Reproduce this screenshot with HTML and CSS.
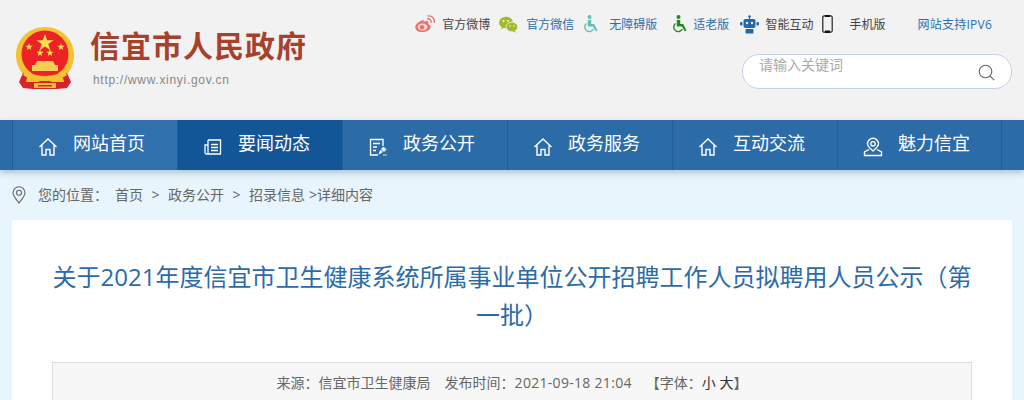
FILE: index.html
```html
<!DOCTYPE html>
<html lang="zh-CN">
<head>
  <meta charset="UTF-8">
  <meta name="viewport" content="width=device-width, initial-scale=1.0">
  <title>关于2021年度信宜市卫生健康系统所属事业单位公开招聘工作人员拟聘用人员公示（第一批）</title>
  <link rel="stylesheet" href="styles.css">
</head>
<body>
  <header class="top">
    <div class="brand">
      <svg class="emblem" viewBox="0 0 58 64" width="58" height="64">
        <path d="M29 1C13 1 0 13 0 29c0 9 4 17 10 22h38c6-5 10-13 10-22C58 13 45 1 29 1z" fill="#f2c230"/>
        <path d="M7 47L3 56l4 6 10 1h24l10-1 4-6-4-9z" fill="#d8232a"/>
        <circle cx="29" cy="28" r="23.500" fill="#ec2227"/>
        <path d="M29 8l2.100 6.200h6.500l-5.300 3.900 2 6.200-5.300-3.800-5.300 3.800 2-6.200-5.300-3.900h6.500z" fill="#fbe14b"/>
        <path d="M13 17l.9 2.700h2.800l-2.300 1.700.9 2.700-2.300-1.700-2.300 1.700.9-2.700-2.300-1.700h2.800zM45 17l.9 2.700h2.800l-2.300 1.700.9 2.700-2.300-1.700-2.300 1.700.9-2.700-2.300-1.700h2.800zM24 23l.9 2.700h2.800l-2.300 1.700.9 2.700-2.300-1.700-2.300 1.700.9-2.700-2.300-1.700h2.800zM34 23l.9 2.700h2.800l-2.300 1.700.9 2.700-2.300-1.700-2.300 1.700.9-2.700-2.300-1.700h2.800z" fill="#fbe14b"/>
        <path d="M21 35h16l2 4h3v6H16v-6h3z" fill="#f6cf52"/>
        <path d="M10 44c5 3 9 6 19 6s14-3 19-6l3 5c-6 4-12 6-22 6s-16-2-22-6z" fill="#f2c230"/>
        <path d="M11 52h36l1 4H36l-7-3-7 3H10z" fill="#f2c230"/>
        <rect x="18" y="57" width="22" height="5" fill="#f2c230"/>
        <path d="M22 59h14v1.500H22z" fill="#d8232a"/>
      </svg>
      <div class="brand-text">
        <h1 class="brand-name">信宜市人民政府</h1>
        <p class="brand-url">http://www.xinyi.gov.cn</p>
      </div>
    </div>

    <div class="tools">
      <ul class="links">
        <li class="link link-weibo">
          <svg viewBox="0 0 20 18" width="20" height="18">
            <path d="M8 5C4 6 0 9.500 .3 12.500c.4 3.300 4 5 8.200 4.500 4.300-.5 7.500-3 7.200-5.500-.2-1.500-1.700-2.100-2.500-2.300.7-1.700.3-2.800-.8-3.100-1.200-.4-2.800.3-3.700 1 .3-1.800-.3-2.900-.7-2.600z" fill="#e8736f"/>
            <ellipse cx="7.500" cy="12" rx="4.800" ry="3.400" fill="#f7d9d7"/>
            <circle cx="7" cy="12.300" r="2.400" fill="#e8736f"/>
            <path d="M12 3.800c2.600-.6 4.600 1.500 4.100 4M12.500 1C16.800.2 20.300 3.500 19 8" fill="none" stroke="#e8736f" stroke-width="1.400"/>
          </svg>
          <span>官方微博</span>
        </li>
        <li class="link link-blue link-wechat">
          <svg viewBox="0 0 19 17" width="19" height="17">
            <ellipse cx="7" cy="6.500" rx="7" ry="5.800" fill="#a2bb2b"/>
            <path d="M3 10l-.8 3.500L6 11z" fill="#a2bb2b"/>
            <ellipse cx="13" cy="11" rx="5.800" ry="4.800" fill="#a2bb2b" stroke="#f2f2f2" stroke-width=".8"/>
            <path d="M15.500 14l1.500 2.800-3.800-1.800z" fill="#a2bb2b"/>
            <circle cx="4.600" cy="5" r="1" fill="#f2f2f2"/>
            <circle cx="9" cy="5" r="1" fill="#f2f2f2"/>
            <circle cx="11" cy="10" r=".8" fill="#f2f2f2"/>
            <circle cx="15" cy="10" r=".8" fill="#f2f2f2"/>
          </svg>
          <span>官方微信</span>
        </li>
        <li class="link link-blue link-access">
          <svg viewBox="0 0 16 18" width="16" height="18">
            <circle cx="6.500" cy="2" r="2" fill="#5fc0b2"/>
            <path d="M4.800 5h3.400v4h3l3.300 6.500-1.800.8L10 11.500H4.800z" fill="#5fc0b2"/>
            <path d="M3.500 8.500a4.500 4.500 0 1 0 6.800 5.500" fill="none" stroke="#5fc0b2" stroke-width="1.400"/>
          </svg>
          <span>无障碍版</span>
        </li>
        <li class="link link-blue link-elder">
          <svg viewBox="0 0 16 18" width="16" height="18">
            <circle cx="6.500" cy="2" r="2" fill="#22881f"/>
            <path d="M4.800 5h3.400v4h3l3.300 6.500-1.800.8L10 11.500H4.800z" fill="#22881f"/>
            <path d="M3.500 8.500a4.500 4.500 0 1 0 6.800 5.500" fill="none" stroke="#22881f" stroke-width="1.400"/>
          </svg>
          <span>适老版</span>
        </li>
        <li class="link link-robot">
          <svg viewBox="0 0 19 19" width="19" height="19">
            <circle cx="9.500" cy="1.500" r="1.300" fill="#2467a8"/>
            <rect x="9" y="2" width="1" height="2" fill="#2467a8"/>
            <rect x="3.500" y="4" width="12" height="9" rx="2" fill="#2467a8"/>
            <rect x="0" y="7" width="2.500" height="3.500" rx="1" fill="#2467a8"/>
            <rect x="16.500" y="7" width="2.500" height="3.500" rx="1" fill="#2467a8"/>
            <circle cx="7" cy="8" r="1.200" fill="#f2f2f2"/>
            <circle cx="12" cy="8" r="1.200" fill="#f2f2f2"/>
            <rect x="5.500" y="14" width="8" height="4.500" rx="1" fill="#2467a8"/>
          </svg>
          <span>智能互动</span>
        </li>
        <li class="link link-phone">
          <svg viewBox="0 0 11 18" width="11" height="18">
            <rect x=".8" y=".8" width="9.400" height="16.400" rx="1.500" fill="#f2f2f2" stroke="#222" stroke-width="1.200"/>
            <rect x="3" y="0" width="5" height="2" fill="#111"/>
            <rect x="3" y="15.500" width="5" height="2.500" fill="#111"/>
          </svg>
          <span>手机版</span>
        </li>
        <li class="link link-blue link-ipv6"><span>网站支持IPV6</span></li>
      </ul>

      <div class="search">
        <span class="search-hint">请输入关键词</span>
        <svg class="search-icon" viewBox="0 0 17 17" width="17" height="17">
          <circle cx="7.500" cy="7.500" r="6.300" fill="none" stroke="#666" stroke-width="1.100"/>
          <path d="M12 12l4.200 4.200" stroke="#666" stroke-width="1.100"/>
        </svg>
      </div>
    </div>
  </header>

  <nav class="nav">
    <a class="nav-item nav-first">
      <svg viewBox="0 0 20 20" width="20" height="20"><path d="M1.500 10L10 2l8.500 8M4 8.500V18h4v-5.500h4V18h4V8.500" fill="none" stroke="#fff" stroke-width="1.400"/></svg>
      <span>网站首页</span>
    </a>
    <a class="nav-item nav-active">
      <svg viewBox="0 0 20 20" width="20" height="20"><path d="M5 3h12.500v14H3.500a1.500 1.500 0 0 1-1.500-1.500V8h3M5 3v14M8 7.500h7M8 10.500h7M8 13.500h7" fill="none" stroke="#fff" stroke-width="1.300"/></svg>
      <span>要闻动态</span>
    </a>
    <a class="nav-item">
      <svg viewBox="0 0 20 20" width="20" height="20"><path d="M10 18H2.500V2.500h12.500V9M5 6.500h7M5 10h4M5 13.500h3" fill="none" stroke="#fff" stroke-width="1.300"/><path d="M11 17l1.500-4 2 2zM13.500 12l2-2 2.500 2.500-2 2zM15 18h4" fill="#fff" stroke="#fff" stroke-width=".8"/></svg>
      <span>政务公开</span>
    </a>
    <a class="nav-item">
      <svg viewBox="0 0 20 20" width="20" height="20"><path d="M1.500 10L10 2l8.500 8M4 8.500V18h4v-5.500h4V18h4V8.500" fill="none" stroke="#fff" stroke-width="1.400"/></svg>
      <span>政务服务</span>
    </a>
    <a class="nav-item">
      <svg viewBox="0 0 20 20" width="20" height="20"><path d="M1.500 10L10 2l8.500 8M4 8.500V18h4v-5.500h4V18h4V8.500" fill="none" stroke="#fff" stroke-width="1.400"/></svg>
      <span>互动交流</span>
    </a>
    <a class="nav-item">
      <svg viewBox="0 0 20 20" width="20" height="20"><path d="M10 14C7 11.500 4.500 9.500 4.500 6.800a5.500 5.500 0 0 1 11 0c0 2.700-2.500 4.700-5.500 7.200z" fill="none" stroke="#fff" stroke-width="1.400"/><circle cx="10" cy="6.800" r="2.200" fill="none" stroke="#fff" stroke-width="1.300"/><path d="M6 12.500L1.500 15v3.500h17V15L14 12.500" fill="none" stroke="#fff" stroke-width="1.400"/></svg>
      <span>魅力信宜</span>
    </a>
  </nav>

  <div class="crumbs">
    <svg viewBox="0 0 14 18" width="14" height="18"><path d="M7 17C3.500 12.500 1 10 1 6.800a6 6 0 0 1 12 0C13 10 10.500 12.500 7 17z" fill="none" stroke="#666" stroke-width="1.100"/><circle cx="7" cy="6.800" r="2.500" fill="none" stroke="#666" stroke-width="1.100"/></svg>
    <span class="crumbs-label">您的位置：</span>
    <a>首页</a>
    <i>&gt;</i>
    <a>政务公开</a>
    <i>&gt;</i>
    <a>招录信息</a>
    <span class="crumbs-tail">&gt;详细内容</span>
  </div>

  <main class="article">
    <h2 class="article-title">关于2021年度信宜市卫生健康系统所属事业单位公开招聘工作人员拟聘用人员公示（第一批）</h2>
    <div class="article-meta">
      <span>来源：信宜市卫生健康局</span>
      <span>发布时间：<span class="date">2021-09-18 21:04</span></span>
      <span class="font-size">【字体：<b>小</b> <b>大</b>】</span>
    </div>
  </main>
</body>
</html>
```

FILE: styles.css
```css
* {
  margin: 0;
  padding: 0;
  box-sizing: border-box;
}

html, body {
  height: 400px;
  overflow: hidden;
}

body {
  background: #e9f5fc;
  font: 14px "Open Sans", "Noto Sans CJK SC", sans-serif;
  color: #666666;
}

ul {
  list-style: none;
}

.top {
  height: 120px;
  background: #f2f2f2;
  display: flex;
  justify-content: space-between;
  padding: 0 12px 0 16px;
}

.brand {
  display: flex;
  align-items: flex-start;
  padding-top: 26px;
}

.brand-text {
  margin-left: 16px;
}

.brand-name {
  font-size: 30px;
  line-height: 40px;
  font-weight: 700;
  letter-spacing: 1px;
  color: #a8412b;
}

.brand-url {
  margin: 6px 0 0 3px;
  font: 12px/16px "Liberation Sans", sans-serif;
  letter-spacing: 0.7px;
  color: #888888;
}

.tools {
  display: flex;
  flex-direction: column;
  align-items: flex-end;
}

.links {
  display: flex;
  align-items: center;
  height: 18px;
  margin-top: 15px;
  font-size: 12px;
  color: #444444;
}

.link {
  display: flex;
  align-items: center;
}

.link-blue {
  color: #2a6fb0;
}

.link-weibo svg { margin-right: 7px; }
.link-wechat { margin-left: 9px; }
.link-wechat svg { margin-right: 8px; }
.link-access { margin-left: 9px; }
.link-access svg { margin-right: 10px; }
.link-elder { margin-left: 15px; }
.link-elder svg { margin-right: 5px; }
.link-robot { margin-left: 11px; }
.link-robot svg { margin-right: 6px; }
.link-phone { margin-left: 9px; }
.link-phone svg { margin-right: 16px; }
.link-ipv6 { margin: 0 20px 0 32px; letter-spacing: 0.25px; }

.search {
  width: 270px;
  height: 35px;
  margin-top: 21px;
  padding: 0 16px;
  border: 1px solid #c5d2e5;
  border-radius: 17px;
  background: #ffffff;
  display: flex;
  justify-content: space-between;
}

.search-hint {
  font-size: 14px;
  line-height: 20px;
  color: #aaaaaa;
}

.search-icon {
  margin-top: 9px;
}

.nav {
  height: 50px;
  padding: 0 22px 0 12px;
  background: #2b6ca8;
  display: flex;
  position: relative;
  box-shadow: 0 3px 6px rgba(40, 80, 120, 0.3);
}

.nav-item {
  width: 165px;
  padding-left: 25px;
  border-left: 1px solid #215d98;
  display: flex;
  align-items: center;
  font-size: 18px;
  color: #ffffff;
}

.nav-item:last-child {
  border-right: 1px solid #215d98;
}

.nav-item span {
  margin: -6px 0 0 15px;
}

.nav-item svg {
  margin-top: 4px;
}

.nav-first {
  background: #2f70ad;
}

.nav-active {
  background: #125698;
}

.crumbs {
  height: 50px;
  padding-left: 12px;
  display: flex;
  align-items: center;
  font-size: 14px;
}

.crumbs-label {
  margin: -2px 7px 0 12px;
}

.crumbs a {
  margin-top: -2px;
}

.crumbs i {
  font-style: normal;
  margin: -2px 8.500px 0;
}

.crumbs-tail {
  margin: -2px 0 0 4px;
}

.article {
  margin: 0 12px;
  padding: 38px 40px 0;
  background: #ffffff;
  height: 180px;
}

.article-title {
  font-size: 24px;
  line-height: 38px;
  font-weight: 400;
  text-align: center;
  color: #2b6ca8;
}

.article-meta {
  margin-top: 28px;
  height: 44px;
  padding-top: 9px;
  border: 1px solid #dddddd;
  background: #f7f7f7;
  display: flex;
  justify-content: center;
  gap: 14px;
  line-height: 22px;
}

.date {
  letter-spacing: 0.3px;
}

.font-size b {
  font-weight: 400;
  color: #333333;
}
```
